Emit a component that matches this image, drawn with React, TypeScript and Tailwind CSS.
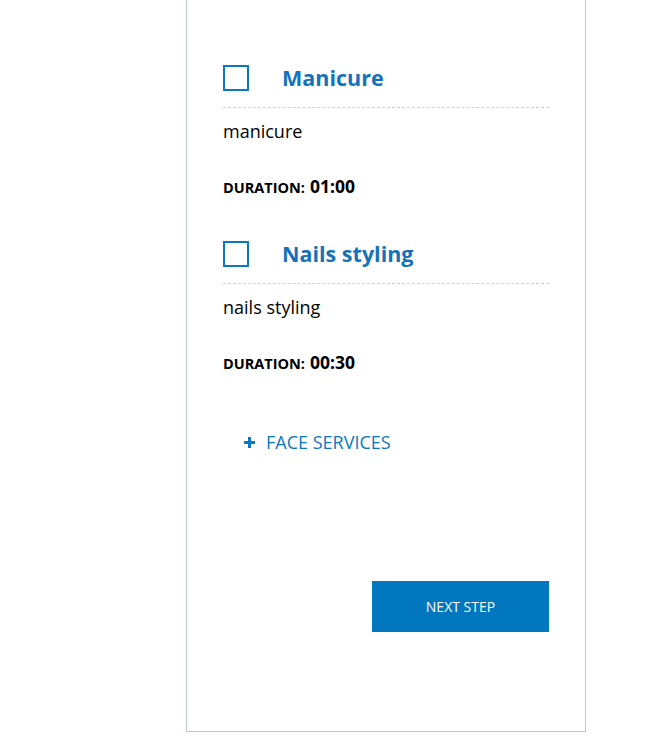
import { useState } from "react";

type Service = {
  id: string;
  title: string;
  description: string;
  duration: string;
};

const services: Service[] = [
  { id: "manicure", title: "Manicure", description: "manicure", duration: "01:00" },
  { id: "nails", title: "Nails styling", description: "nails styling", duration: "00:30" },
];

function ServiceItem({ service, checked, onToggle }: { service: Service; checked: boolean; onToggle: () => void }) {
  return (
    <div>
      <div className="box-content flex h-[26px] items-center border-b border-dashed border-[#c9d3d6] pb-[16px]">
        <button
          type="button"
          onClick={onToggle}
          className="flex h-[26px] w-[26px] shrink-0 items-center justify-center border-2 border-[#0a78c0] bg-white"
        >
          {checked ? <span className="h-[12px] w-[12px] bg-[#0a78c0]" /> : null}
        </button>
        <h3 className="ml-[33px] text-[21.5px] font-bold leading-[26px] text-[#1572ba]">{service.title}</h3>
      </div>
      <p className="mt-[11px] text-[18px] leading-[24px] text-black">{service.description}</p>
      <p className="mt-[31px] flex items-baseline gap-[5px] leading-[24px] text-black">
        <span className="text-[14.5px] font-bold uppercase">Duration:</span>
        <span className="text-[17.5px] font-bold">{service.duration}</span>
      </p>
    </div>
  );
}

export default function App() {
  const [selected, setSelected] = useState<string[]>([]);

  function toggle(id: string) {
    setSelected((prev) => (prev.includes(id) ? prev.filter((s) => s !== id) : [...prev, id]));
  }

  return (
    <div className="min-h-[746px] bg-white pl-[186px] font-['Open_Sans',sans-serif]">
      <section className="flex h-[732px] w-[400px] flex-col border-x border-b border-[#b9c9cd] px-[36px] pt-[65px]">
        <div className="flex flex-col gap-[41px]">
          {services.map((service) => (
            <ServiceItem
              key={service.id}
              service={service}
              checked={selected.includes(service.id)}
              onToggle={() => toggle(service.id)}
            />
          ))}
        </div>

        <button type="button" className="ml-[21px] mt-[53px] flex items-center gap-[11px] self-start text-[18px] text-[#0a78c0]">
          <svg width="11" height="11" viewBox="0 0 11 11" aria-hidden="true">
            <rect x="4" y="0" width="3" height="11" fill="#0a78c0" />
            <rect x="0" y="4" width="11" height="3" fill="#0a78c0" />
          </svg>
          FACE SERVICES
        </button>

        <button
          type="button"
          className="mt-[125px] h-[51px] w-[177px] self-end bg-[#0077be] text-[14px] text-white"
        >
          NEXT STEP
        </button>
      </section>
    </div>
  );
}
